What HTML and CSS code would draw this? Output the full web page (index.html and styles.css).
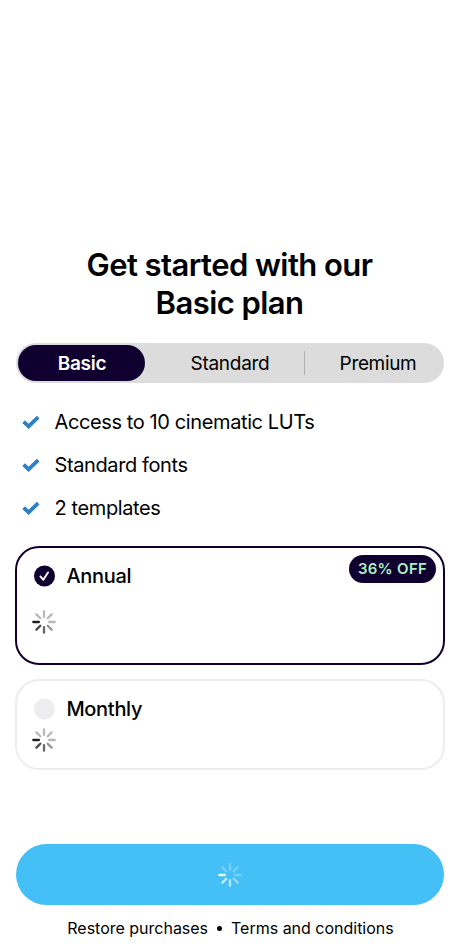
FILE: index.html
```html
<!DOCTYPE html>
<html lang="en">
<head>
<meta charset="utf-8">
<meta name="viewport" content="width=device-width, initial-scale=1">
<title>Plans</title>
<link rel="stylesheet" href="styles.css">
</head>
<body>
<svg class="defs" aria-hidden="true">
  <symbol id="spinner" viewBox="0 0 24 24">
    <g fill="none" stroke="currentColor" stroke-width="2.3" stroke-linecap="round">
      <path class="s1" d="M1.3 12h5.6"/>
      <path class="s2" d="M4.4 19.6l3.9-3.9"/>
      <path class="s3" d="M12 22.7v-5.6"/>
      <path class="s4" d="M19.6 19.6l-3.9-3.9"/>
      <path class="s5" d="M22.7 12h-5.6M19.6 4.4l-3.9 3.9M12 1.3v5.6M4.4 4.4l3.9 3.9"/>
    </g>
  </symbol>
  <symbol id="tick" viewBox="0 0 18 14">
    <path d="M1.6 6.6l5 4.7L16.2 2.2" fill="none" stroke="currentColor" stroke-width="3.8"/>
  </symbol>
</svg>
<main class="screen">
  <h1 class="title">Get started with our<br>Basic plan</h1>
  <div class="tabs">
    <button class="tab tab-active">Basic</button>
    <button class="tab tab-mid">Standard</button>
    <button class="tab tab-last">Premium</button>
  </div>
  <ul class="features">
    <li><svg class="tick"><use href="#tick"/></svg><span>Access to 10 cinematic LUTs</span></li>
    <li><svg class="tick"><use href="#tick"/></svg><span>Standard fonts</span></li>
    <li><svg class="tick"><use href="#tick"/></svg><span>2 templates</span></li>
  </ul>
  <section class="card card-annual">
    <div class="row">
      <svg class="radio" viewBox="-0.5 0 22 22"><circle cx="11" cy="11" r="10.5" fill="#10002f"/><path d="M6.9 11.4l2.9 3.4 4.7-7.4" fill="none" stroke="#fff" stroke-width="1.9" stroke-linecap="round" stroke-linejoin="round"/></svg>
      <span class="name">Annual</span>
    </div>
    <svg class="spinner"><use href="#spinner"/></svg>
    <span class="badge"><span>36% OFF</span></span>
  </section>
  <section class="card card-monthly">
    <div class="row">
      <svg class="radio" viewBox="-0.5 0 22 22"><circle cx="11" cy="11" r="10.5" fill="#ededef"/></svg>
      <span class="name">Monthly</span>
    </div>
    <svg class="spinner"><use href="#spinner"/></svg>
  </section>
  <button class="cta" aria-label="Continue"><svg class="spinner"><use href="#spinner"/></svg></button>
  <footer class="links"><span>Restore purchases</span><i class="dot"></i><span>Terms and conditions</span></footer>
</main>
</body>
</html>
```
FILE: styles.css
```css
* { box-sizing: border-box; }
body { margin: 0; background: #fff; color: #000; font-family: Inter, "Liberation Sans", sans-serif; }
button { border: 0; padding: 0; background: none; color: inherit; font: inherit; }
svg { display: block; }
.defs { position: absolute; width: 0; height: 0; }
.screen { width: 460px; height: 950px; padding: 246px 15px 0; overflow: hidden; display: flex; flex-direction: column; }
.title { margin: 0 1px 0 0; text-align: center; font-size: 31px; line-height: 38px; font-weight: 600; letter-spacing: -0.57px; }
.tabs { display: flex; height: 40px; margin: 21px 1px 0; padding: 2px; border-radius: 20px; background: #dcdcdc; font-size: 19px; }
.tab { display: flex; align-items: center; justify-content: center; height: 36px; }
.tab-active { width: 127px; padding-left: 1px; border-radius: 18px; background: #10002f; color: #fff; font-weight: 600; letter-spacing: -0.25px; }
.tab-mid { width: 160px; padding-left: 10px; letter-spacing: -0.28px; }
.tab-last { position: relative; flex: 1; padding-left: 9px; letter-spacing: -0.34px; }
.tab-last::before { content: ""; position: absolute; left: -1px; top: 6px; width: 1px; height: 24px; background: #b0b0b2; }
.features { list-style: none; margin: 17px 0 0; padding: 0 0 0 7px; font-size: 20px; letter-spacing: -0.39px; }
.features li { display: flex; align-items: center; height: 43px; }
.tick { width: 18px; height: 14px; margin-right: 14.5px; color: #2d80c4; }
.card { position: relative; width: 430px; border-radius: 24px; padding: 17px 0 0 15px; flex: none; }
.card-annual { height: 119px; margin-top: 17px; border: 2px solid #10002f; }
.card-monthly { height: 91px; margin-top: 14px; border: 2px solid #ededef; }
.row { display: flex; align-items: center; height: 22px; padding-left: 1px; }
.radio { width: 22px; height: 22px; margin-right: 11.4px; }
.name { font-size: 20px; font-weight: 500; letter-spacing: -0.3px; }
.spinner { width: 24px; height: 24px; }
.card-annual .spinner { margin-top: 23px; }
.card-monthly .spinner { margin-top: 8px; }
.s1 { opacity: .88; }
.s2 { opacity: .72; }
.s3 { opacity: .6; }
.s4 { opacity: .42; }
.s5 { opacity: .28; }
.badge { position: absolute; right: 7px; top: 7px; width: 87px; height: 28px; padding-bottom: 2px; border-radius: 14px; background: #10002f; color: #aaf0c4; display: flex; align-items: center; justify-content: center; font-size: 15px; font-weight: 600; letter-spacing: .3px; }
.cta { display: flex; align-items: center; justify-content: center; height: 61px; margin: 74px 1px 0; border-radius: 31px; background: #45c0f7; color: #fff; flex: none; }
.links { display: flex; align-items: center; justify-content: center; height: 24px; margin-top: 11px; padding-left: 1px; font-size: 16px; letter-spacing: -0.01px; }
.dot { width: 5px; height: 5px; margin: 0 9px; border-radius: 50%; background: #000; }
```
